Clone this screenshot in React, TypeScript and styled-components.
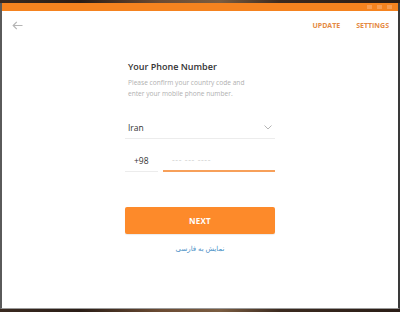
import React from "react";
import styled, { createGlobalStyle } from "styled-components";

const Global = createGlobalStyle`
  html, body { margin: 0; padding: 0; background: #2b211c; }
  #root { width: 400px; height: 312px; overflow: hidden; }
  * { box-sizing: border-box; }
`;

const Screen = styled.div`
  width: 400px;
  height: 312px;
  display: flex;
  flex-direction: column;
  background: #1f1a17;
  font-family: "Open Sans", "Noto Sans", sans-serif;
`;

const DesktopStrip = styled.div<{ h: number }>`
  height: ${(p) => p.h}px;
  flex: none;
  background: linear-gradient(90deg, #3a2a20 0%, #2a1d16 20%, #6b4b33 40%, #7a5c40 55%, #3b2a1f 70%, #2a1d16 100%);
`;

const Window = styled.div`
  flex: 1;
  display: flex;
  flex-direction: column;
  border-left: 2px solid #5a5a5a;
  border-right: 2px solid #3a3a3a;
  border-bottom: 1px solid #9a9a9a;
  background: #fff;
`;

const TitleBar = styled.div`
  height: 8px;
  flex: none;
  background: #f5831f;
  display: flex;
  align-items: center;
  justify-content: flex-end;
  gap: 5px;
  padding-right: 6px;
`;

const Ctrl = styled.span`
  width: 5px;
  height: 4px;
  background: #f9a45c;
  opacity: 0.8;
`;

const Content = styled.div`
  flex: 1;
  display: flex;
  flex-direction: column;
`;

const Header = styled.div`
  height: 28px;
  display: flex;
  align-items: center;
  padding: 0 9px 0 8px;
`;

const BackButton = styled.div`
  width: 14px;
  height: 14px;
  display: flex;
  align-items: center;
  justify-content: center;
  color: #b5b5b5;
`;

const Spacer = styled.div`
  flex: 1;
`;

const HeaderLink = styled.span`
  font-family: "Open Sans", sans-serif;
  font-size: 7px;
  font-weight: 700;
  color: #e58a43;
  margin-left: 16px;
`;

const Form = styled.div`
  width: 150px;
  margin: 21px auto 0;
  display: flex;
  flex-direction: column;
`;

const Title = styled.div`
  font-size: 9px;
  font-weight: 600;
  color: #333;
  padding-left: 3px;
  line-height: 14px;
`;

const Desc = styled.div`
  font-size: 6.6px;
  color: #b0b0b0;
  padding-left: 3px;
  line-height: 11px;
  margin-top: 3px;
`;

const Select = styled.div`
  margin-top: 18px;
  height: 22px;
  display: flex;
  align-items: center;
  justify-content: space-between;
  padding: 0 3px;
  border-bottom: 1px solid #ececec;
  font-size: 8.5px;
  color: #333;
`;

const PhoneRow = styled.div`
  margin-top: 10px;
  display: flex;
  align-items: flex-end;
  gap: 5px;
  height: 23px;
`;

const Code = styled.div`
  width: 33px;
  height: 100%;
  display: flex;
  align-items: center;
  padding-left: 9px;
  font-size: 8.5px;
  color: #333;
  border-bottom: 1px solid #ececec;
`;

const NumberField = styled.div`
  flex: 1;
  height: 100%;
  display: flex;
  align-items: center;
  padding-left: 9px;
  border-bottom: 2px solid #f7a05a;
  font-size: 8.5px;
  color: #cfcfcf;
  letter-spacing: 0.6px;
`;

const NextButton = styled.div`
  margin-top: 35px;
  height: 27px;
  border-radius: 2px;
  background: #fd8a2a;
  color: #fff;
  font-size: 8px;
  font-weight: 700;
  display: flex;
  align-items: center;
  justify-content: center;
  letter-spacing: 0.2px;
  box-shadow: 0 1px 1px rgba(0,0,0,0.08);
`;

const LangLink = styled.div`
  margin-top: 10px;
  text-align: center;
  font-family: "Noto Sans", "DejaVu Sans", sans-serif;
  font-size: 7px;
  color: #4a8fc6;
  direction: rtl;
`;

export default function App() {
  return (
    <>
      <Global />
      <Screen>
        <DesktopStrip h={3} />
        <Window>
          <TitleBar>
            <Ctrl />
            <Ctrl />
            <Ctrl />
          </TitleBar>
          <Content>
            <Header>
              <BackButton>
                <svg width="11" height="9" viewBox="0 0 11 9" fill="none" stroke="currentColor" strokeWidth="1.2">
                  <path d="M10.5 4.5H1.2M4.8 0.9L1.2 4.5L4.8 8.1" />
                </svg>
              </BackButton>
              <Spacer />
              <HeaderLink>UPDATE</HeaderLink>
              <HeaderLink>SETTINGS</HeaderLink>
            </Header>
            <Form>
              <Title>Your Phone Number</Title>
              <Desc>
                Please confirm your country code and
                <br />
                enter your mobile phone number.
              </Desc>
              <Select>
                <span>Iran</span>
                <svg width="8" height="5" viewBox="0 0 8 5" fill="none" stroke="#b5b5b5" strokeWidth="1">
                  <path d="M0.5 0.5L4 4L7.5 0.5" />
                </svg>
              </Select>
              <PhoneRow>
                <Code>+98</Code>
                <NumberField>--- --- ----</NumberField>
              </PhoneRow>
              <NextButton>NEXT</NextButton>
              <LangLink>نمایش به فارسی</LangLink>
            </Form>
          </Content>
        </Window>
        <DesktopStrip h={3} />
      </Screen>
    </>
  );
}
